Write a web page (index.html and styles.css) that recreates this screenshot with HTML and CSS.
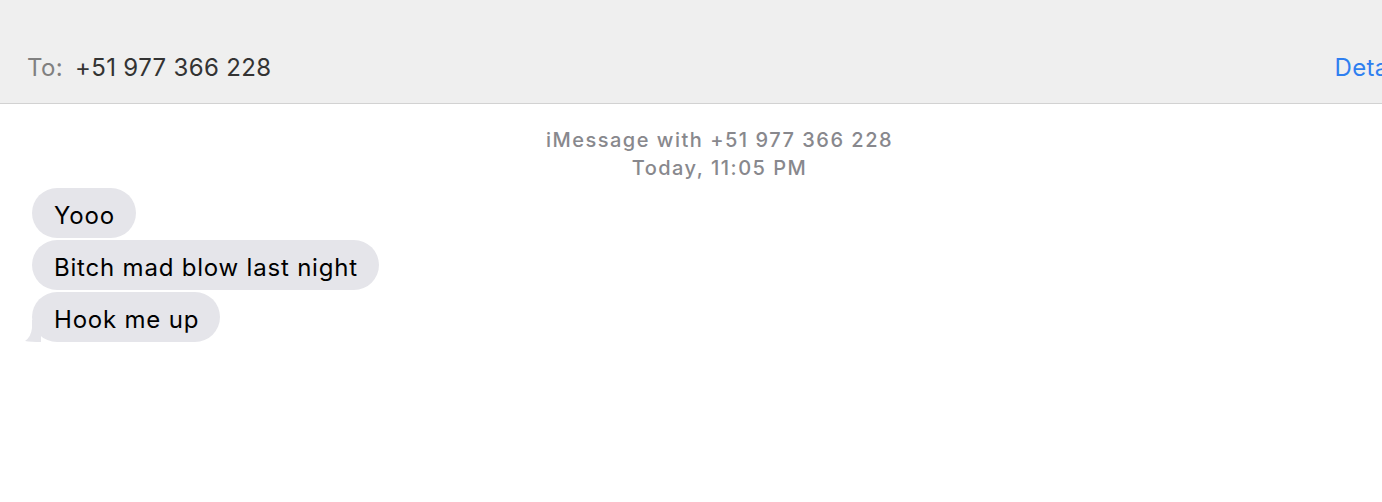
FILE: index.html
```html
<!DOCTYPE html>
<html lang="en">
<head>
    <meta charset="UTF-8">
    <title>Messages</title>
    <link rel="stylesheet" href="styles.css">
</head>
<body>
    <div class="window">
        <!-- Recipient bar -->
        <div class="header">
            <span class="to-label">To:</span>
            <span class="to-number">+51 977 366 228</span>
            <span class="details">Details</span>
        </div>

        <!-- Conversation -->
        <div class="conversation">
            <div class="info">
                <div>iMessage with +51 977 366 228</div>
                <div>Today, 11:05 PM</div>
            </div>

            <div class="messages">
                <div class="bubble">Yooo</div>
                <div class="bubble">Bitch mad blow last night</div>
                <div class="bubble last">
                    Hook me up
                    <svg class="tail" width="16" height="22" viewBox="0 0 16 22">
                        <path d="M16 0 L16 22 Q6 22 0 21 Q6 17 7 8 L7 0 Z" fill="#e5e5ea"/>
                    </svg>
                </div>
            </div>
        </div>
    </div>
</body>
</html>
```

FILE: styles.css
```css
/* General */
body {
    margin: 0;
    padding: 0;
    background: #fff;
    overflow: hidden;
    font-family: 'Inter', 'Liberation Sans', sans-serif;
}

.window {
    width: 1439px;
}

/* Header */
.header {
    display: flex;
    align-items: flex-end;
    height: 104px;
    box-sizing: border-box;
    padding: 0 25px 21px 27px;
    background: #efefef;
    border-bottom: 1px solid #d2d2d2;
    font-size: 24px;
    letter-spacing: 0.35px;
}

.to-label {
    color: #808080;
    margin-right: 12px;
}

.to-number {
    color: #333;
}

.details {
    margin-left: auto;
    color: #2f7ff0;
}

/* Conversation */
.conversation {
    padding-top: 22px;
}

.info {
    text-align: center;
    color: #88888d;
    font-size: 20px;
    font-weight: 500;
    letter-spacing: 1.5px;
    line-height: 28px;
}

.messages {
    display: flex;
    flex-direction: column;
    align-items: flex-start;
    gap: 2px;
    padding: 6px 0 0 32px;
}

.bubble {
    position: relative;
    background: #e5e5ea;
    color: #000;
    font-size: 24px;
    letter-spacing: 0.8px;
    line-height: 44px;
    padding: 6px 21px 0 22px;
    border-radius: 25px;
}

.tail {
    position: absolute;
    left: -7px;
    bottom: 0;
}
```
